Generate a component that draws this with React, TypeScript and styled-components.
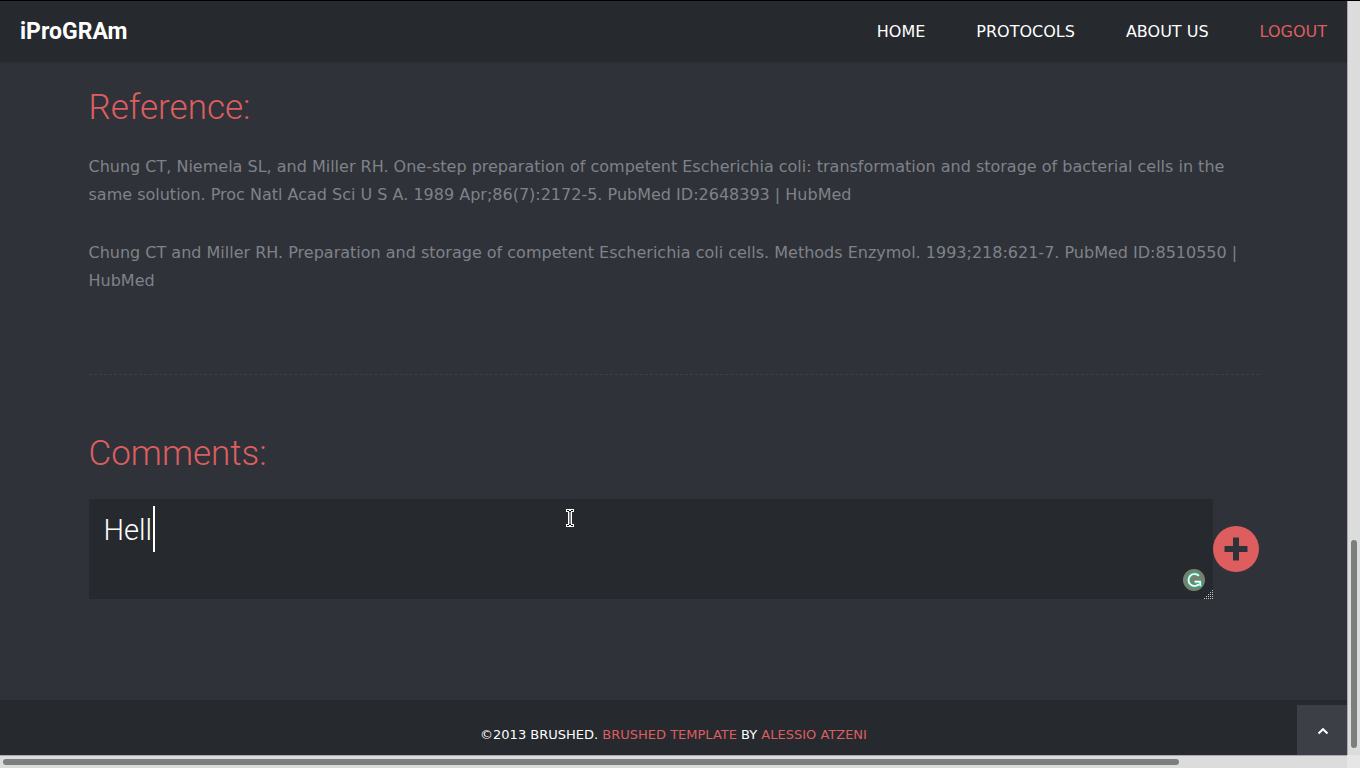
import React, { useState } from "react";
import styled, { createGlobalStyle } from "styled-components";

const colors = {
  page: "#2f3238",
  dark: "#26292e",
  accent: "#de5e60",
  text: "#7f8289",
  line: "#3c3f45",
  track: "#dcdcdc",
  thumb: "#7b7f7e",
};

const display = `"Roboto", "Open Sans", sans-serif`;

const GlobalStyle = createGlobalStyle`
  * { box-sizing: border-box; }
  body {
    margin: 0;
    background: ${colors.page};
    color: ${colors.text};
    font: 16px/28px "DejaVu Sans", sans-serif;
  }
`;

const Frame = styled.div`
  display: grid;
  grid-template: minmax(0, 1fr) 13px / minmax(0, 1fr) 13px;
  height: 100vh;
  border-top: 1px solid #000;
`;

const Page = styled.div`
  position: relative;
  display: flex;
  flex-direction: column;
  min-height: 0;
  overflow: hidden;
`;

const Header = styled.header`
  display: flex;
  flex: none;
  align-items: center;
  justify-content: space-between;
  height: 62px;
  padding: 0 20px;
  background: ${colors.dark};
  border-bottom: 1px solid #2b2e32;
`;

const Brand = styled.a`
  color: #fff;
  font: 700 23px/30px ${display};
  text-decoration: none;
`;

const Nav = styled.nav`
  display: flex;
  gap: 51px;
`;

const NavLink = styled.a<{ $accent?: boolean }>`
  color: ${(p) => (p.$accent ? colors.accent : "#fff")};
  text-decoration: none;
`;

const Main = styled.main`
  flex: 1;
  width: 100%;
  max-width: 1170px;
  margin: 0 auto;
`;

const Section = styled.section`
  padding-top: 23px;
`;

const Title = styled.h2`
  margin: 0 0 23px;
  color: ${colors.accent};
  font: 300 35px/44px ${display};
`;

const Citation = styled.p`
  margin: 0 0 30px;
`;

const Divider = styled.hr`
  height: 0;
  margin: 79px 0 34px;
  border: 0;
  border-top: 1px dashed ${colors.line};
`;

const CommentForm = styled.form`
  display: flex;
  align-items: center;
`;

const Field = styled.div`
  position: relative;
  flex: 1;
  height: 100px;
`;

const CommentBox = styled.textarea`
  display: block;
  width: 100%;
  height: 100%;
  padding: 8px 15px;
  border: 0;
  outline: 0;
  resize: none;
  background: ${colors.dark};
  color: #fff;
  font: 300 29px/46px ${display};
`;

const Caret = styled.span`
  position: absolute;
  top: 7px;
  left: 64px;
  width: 2px;
  height: 46px;
  background: #fff;
`;

const Pointer = styled.svg`
  position: absolute;
  top: 10px;
  left: 477px;
`;

const Badge = styled.svg`
  position: absolute;
  right: 8px;
  bottom: 8px;
`;

const Grip = styled.svg`
  position: absolute;
  right: 0;
  bottom: 0;
`;

const AddButton = styled.button`
  display: grid;
  flex: none;
  place-items: center;
  width: 46px;
  height: 46px;
  padding: 0;
  border: 0;
  border-radius: 50%;
  background: ${colors.accent};
`;

const Footer = styled.footer`
  flex: none;
  height: 55px;
  padding-top: 21px;
  background: ${colors.dark};
  color: #fff;
  font-size: 13px;
  text-align: center;
`;

const FooterLink = styled.a`
  color: ${colors.accent};
  text-decoration: none;
`;

const BackToTop = styled.button`
  position: absolute;
  right: 0;
  bottom: 0;
  display: grid;
  place-items: center;
  width: 50px;
  height: 50px;
  padding: 2px 0 0 2px;
  border: 0;
  background: ${colors.line};
`;

const Track = styled.div<{ $vertical?: boolean }>`
  display: flex;
  flex-direction: ${(p) => (p.$vertical ? "column" : "row")};
  justify-content: ${(p) => (p.$vertical ? "flex-end" : "flex-start")};
  padding: ${(p) => (p.$vertical ? "0 3px 7px" : "3px")};
  background: ${colors.track};
  border: 0 solid #a9a9ac;
  border-width: ${(p) => (p.$vertical ? "0 0 0 1px" : "1px 0 0")};
`;

const Thumb = styled.div<{ $vertical?: boolean }>`
  width: ${(p) => (p.$vertical ? "6px" : "87.7%")};
  height: ${(p) => (p.$vertical ? "27.8%" : "6px")};
  border-radius: 3px;
  background: ${colors.thumb};
`;

const Corner = styled.div`
  background: #e6e6e6;
`;

const gripDots = [0, 1, 2, 3, 4].flatMap((row) =>
  Array.from({ length: row + 1 }, (_, i) => ({ x: 9 - i * 2, y: row * 2 + 1 }))
);

export default function App() {
  const [comment, setComment] = useState("Hell");

  return (
    <Frame>
      <GlobalStyle />
      <Page>
        <Header>
          <Brand href="#">iProGRAm</Brand>
          <Nav>
            <NavLink href="#">HOME</NavLink>
            <NavLink href="#">PROTOCOLS</NavLink>
            <NavLink href="#">ABOUT US</NavLink>
            <NavLink href="#" $accent>LOGOUT</NavLink>
          </Nav>
        </Header>
        <Main>
          <Section>
            <Title>Reference:</Title>
            <Citation>
              Chung CT, Niemela SL, and Miller RH. One-step preparation of competent Escherichia coli:
              transformation and storage of bacterial cells in the same solution. Proc Natl Acad Sci U S A.
              1989 Apr;86(7):2172-5. PubMed ID:2648393 | HubMed
            </Citation>
            <Citation>
              Chung CT and Miller RH. Preparation and storage of competent Escherichia coli cells. Methods
              Enzymol. 1993;218:621-7. PubMed ID:8510550 | HubMed
            </Citation>
          </Section>
          <Divider />
          <Section>
            <Title id="comments-title">Comments:</Title>
            <CommentForm onSubmit={(e) => e.preventDefault()}>
              <Field>
                <CommentBox
                  aria-labelledby="comments-title"
                  spellCheck={false}
                  value={comment}
                  onChange={(e) => setComment(e.target.value)}
                />
                <Caret />
                <Pointer width="8" height="18" viewBox="0 0 8 18" aria-hidden="true">
                  <path d="M0 0h8v3H6v12h2v3H0v-3h2V3H0z" fill="#fff" />
                  <path d="M1 1h2v1h2V1h2v1H5v1H4.5v12H5v1h2v1H5v-1H3v1H1v-1h2v-1h.5V3H3V2H1z" fill="#000" />
                </Pointer>
                <Badge width="22" height="22" viewBox="0 0 22 22" aria-hidden="true">
                  <circle cx="11" cy="11" r="11" fill="#728371" />
                  <path d="M16 6.6A6.2 6.2 0 1 0 16 15.6" fill="none" stroke="#18d894" strokeWidth="2.6" />
                  <path d="M15.8 6.8A6 6 0 1 0 15.8 15.2" fill="none" stroke="#fff" strokeWidth="1.7" />
                  <path d="M12 13.6h6v4.4" fill="none" stroke="#18d894" strokeWidth="1.6" />
                  <path d="M11.5 12.6h5.6v4.4" fill="none" stroke="#fff" strokeWidth="1.6" />
                </Badge>
                <Grip width="10" height="10" viewBox="0 0 10 10" shapeRendering="crispEdges" aria-hidden="true">
                  {gripDots.map((d) => (
                    <rect key={`${d.x}-${d.y}`} x={d.x} y={d.y} width="1" height="1" fill="#c4c4c4" />
                  ))}
                </Grip>
              </Field>
              <AddButton type="submit" aria-label="Add comment">
                <svg width="24" height="24" viewBox="0 0 24 24" aria-hidden="true">
                  <path d="M9 .5h6V9h8.5v6H15v8.5H9V15H.5V9H9z" fill={colors.page} />
                </svg>
              </AddButton>
            </CommentForm>
          </Section>
        </Main>
        <Footer>
          ©2013 BRUSHED. <FooterLink href="#">BRUSHED TEMPLATE</FooterLink> BY{" "}
          <FooterLink href="#">ALESSIO ATZENI</FooterLink>
        </Footer>
        <BackToTop type="button" aria-label="Back to top">
          <svg width="12" height="8" viewBox="0 0 12 8" aria-hidden="true">
            <path d="M1.5 6.5 6 2.2l4.5 4.3" fill="none" stroke="#fff" strokeWidth="2" />
          </svg>
        </BackToTop>
      </Page>
      <Track $vertical>
        <Thumb $vertical />
      </Track>
      <Track>
        <Thumb />
      </Track>
      <Corner />
    </Frame>
  );
}
